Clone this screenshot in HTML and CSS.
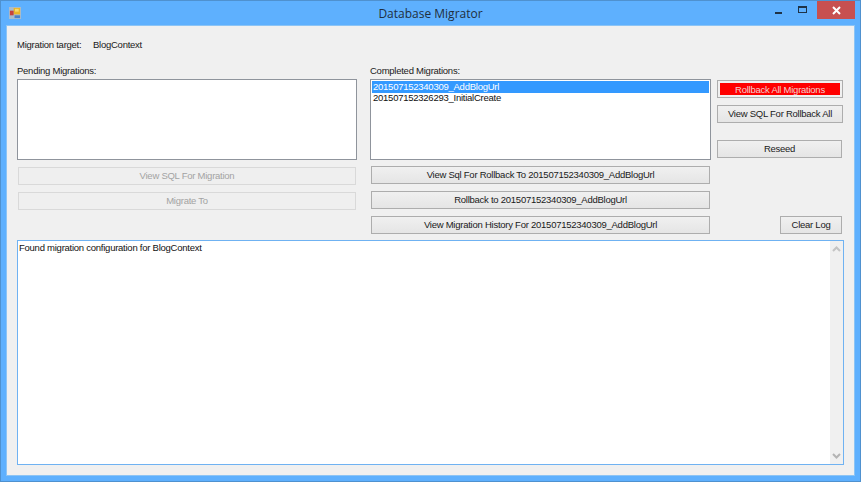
FILE: index.html
```html
<!DOCTYPE html>
<html lang="en">
<head>
<meta charset="utf-8">
<title>Database Migrator</title>
<link rel="stylesheet" href="styles.css">
</head>
<body>
<div class="window">
  <header class="titlebar">
    <svg class="app-icon" width="12" height="12" viewBox="0 0 13 13">
      <rect width="13" height="13" fill="#a9bccd"/>
      <rect x="5" y="1" width="7" height="7" fill="#e9b52a"/>
      <rect x="6.5" y="2" width="4" height="3" fill="#f8d96e"/>
      <rect x="1" y="4" width="4" height="5" fill="#c7423c"/>
      <rect x="6" y="9" width="6" height="3" fill="#4d80c4"/>
    </svg>
    <div class="title">Database Migrator</div>
    <div class="caption-buttons">
      <div class="cap cap-min"><span class="min-glyph"></span></div>
      <div class="cap cap-max"><span class="max-glyph"></span></div>
      <div class="cap cap-close">
        <svg width="9" height="9" viewBox="0 0 9 9"><path d="M1 1 L8 8 M8 1 L1 8" stroke="#fff" stroke-width="2"/></svg>
      </div>
    </div>
  </header>
  <main class="client">
    <div class="target-row">
      <span class="target-label">Migration target:</span>
      <span>BlogContext</span>
    </div>
    <div class="panels">
      <section class="col col-left">
        <label class="list-label">Pending Migrations:</label>
        <div class="listbox"></div>
        <button class="btn btn-wide" disabled>View SQL For Migration</button>
        <button class="btn btn-wide btn-second" disabled>Migrate To</button>
      </section>
      <section class="col col-mid">
        <label class="list-label">Completed Migrations:</label>
        <div class="listbox">
          <div class="item selected">201507152340309_AddBlogUrl</div>
          <div class="item">201507152326293_InitialCreate</div>
        </div>
        <button class="btn btn-wide">View Sql For Rollback To 201507152340309_AddBlogUrl</button>
        <button class="btn btn-wide btn-tight">Rollback to 201507152340309_AddBlogUrl</button>
        <button class="btn btn-wide btn-tight">View Migration History For 201507152340309_AddBlogUrl</button>
      </section>
      <section class="col col-right">
        <button class="btn btn-danger">Rollback All Migrations</button>
        <button class="btn btn-side">View SQL For Rollback All</button>
        <button class="btn btn-reseed">Reseed</button>
        <button class="btn btn-clear">Clear Log</button>
      </section>
    </div>
    <div class="log">
      <div class="log-text">Found migration configuration for BlogContext</div>
      <div class="scrollbar">
        <svg width="9" height="6" viewBox="0 0 9 6"><path d="M1 5 L4.5 1.5 L8 5" fill="none" stroke="#c4c4c4" stroke-width="2"/></svg>
        <svg width="9" height="6" viewBox="0 0 9 6"><path d="M1 1 L4.5 4.5 L8 1" fill="none" stroke="#b4b4b4" stroke-width="2"/></svg>
      </div>
    </div>
  </main>
</div>
</body>
</html>
```
FILE: styles.css
```css
* { box-sizing: border-box; }
html, body { margin: 0; padding: 0; }
body {
  width: 861px;
  height: 482px;
  overflow: hidden;
  font-family: "Liberation Sans", Arial, sans-serif;
  font-size: 9.5px;
  letter-spacing: -0.25px;
  color: #1a1a1a;
  background: #fff;
}
.window {
  width: 861px;
  height: 482px;
  display: flex;
  flex-direction: column;
  background: #5eb0fe;
  border: 1px solid #4f91cf;
  padding: 0 6px 6px;
}
.titlebar {
  height: 25px;
  flex: none;
  display: flex;
  align-items: center;
  margin: 0 -6px;
  padding: 0 0 0 8px;
  position: relative;
}
.app-icon { margin-top: -2px; flex: none; }
.title {
  position: absolute;
  left: 0;
  right: 0;
  top: 4px;
  text-align: center;
  font-family: "Open Sans", sans-serif;
  font-size: 12px;
  letter-spacing: 0;
  line-height: 18px;
  color: #1f2f40;
}
.caption-buttons {
  position: absolute;
  top: 0;
  right: 5px;
  display: flex;
  height: 18px;
}
.cap { display: flex; align-items: center; justify-content: center; }
.cap-min { width: 24px; }
.cap-max { width: 25px; margin-right: 2px; }
.cap-close { width: 38px; background: #c75050; }
.min-glyph { display: block; width: 7px; height: 2px; background: #1f3347; margin-top: 6px; }
.max-glyph { display: block; width: 9px; height: 7px; border: 1px solid #1f3347; border-top-width: 2px; margin-top: -1px; }
.client {
  flex: 1;
  background: #f0f0f0;
  padding: 0 10px 10px;
  display: flex;
  flex-direction: column;
  min-height: 0;
  box-shadow: 0 0 0 1px #8cc4f5;
}
.target-row {
  height: 13px;
  margin-top: 12px;
  line-height: 13px;
  display: flex;
}
.target-label { width: 76px; }
.panels {
  display: flex;
  margin-top: 14px;
  height: 170px;
  flex: none;
}
.col { display: flex; flex-direction: column; align-items: flex-start; }
.col-left { width: 353px; }
.col-mid { width: 347px; }
.col-right { width: 126px; }
.list-label { height: 13px; line-height: 13px; margin-top: -1px; margin-bottom: 2px; }
.listbox {
  width: 340px;
  height: 81px;
  background: #fff;
  border: 1px solid #8f949c;
  padding: 1px;
  flex: none;
}
.col-mid .listbox { width: 341px; }
.item { height: 11px; line-height: 9px; padding-left: 1px; color: #111; }
.item.selected { height: 12px; line-height: 12px; background: #3399ff; color: #fff; }
.btn {
  font: inherit;
  letter-spacing: inherit;
  color: #1a1a1a;
  height: 18px;
  padding: 0 0 2px;
  border: 1px solid #adadad;
  background: linear-gradient(#f0f0f0, #e5e5e5);
  flex: none;
  line-height: 13px;
}
.btn-wide { width: 339px; margin-top: 6px; margin-left: 1px; }
.btn-second { margin-top: 8px; }
.btn-tight { margin-top: 7px; }
.btn:disabled { color: #a3a3a3; border-color: #d9d9d9; background: #efefef; }
.col-left .btn-wide { width: 338px; margin-top: 7px; }
.col-left .btn-wide.btn-second { margin-top: 7px; }
.btn-danger {
  width: 126px;
  margin-top: 15px;
  padding: 0;
  line-height: 11px;
  background: #ff0000;
  color: #f2d0d0;
  border: 3px solid #f0f0f0;
  outline: 1px solid #adadad;
  outline-offset: -1px;
}
.btn-side { width: 126px; margin-top: 7px; }
.btn-reseed { width: 125px; margin-top: 17px; }
.btn-clear { width: 62px; margin-top: 58px; align-self: flex-end; margin-right: 1px; }
.log {
  margin-top: 5px;
  flex: 1;
  min-height: 0;
  background: #fff;
  border: 1px solid #6fb2f2;
  display: flex;
}
.log-text { flex: 1; padding: 0 1px; line-height: 13px; color: #111; }
.scrollbar {
  width: 13px;
  background: #f0f0f0;
  display: flex;
  flex-direction: column;
  justify-content: space-between;
  align-items: center;
  padding: 5px 0;
}
```
